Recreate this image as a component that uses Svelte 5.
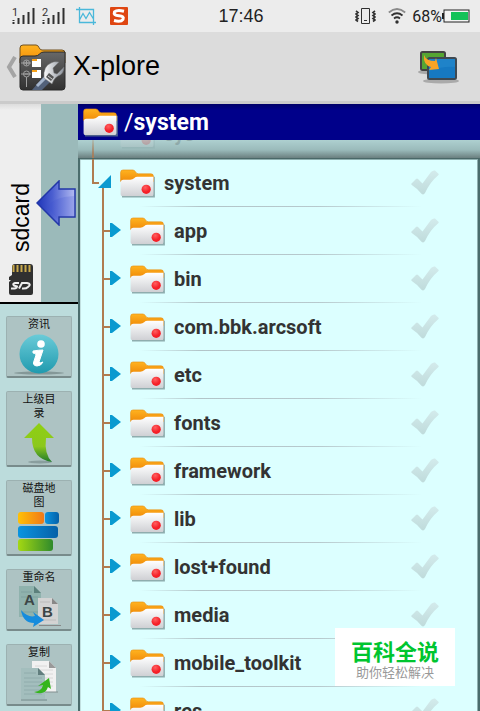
<script>
  const folders = ['app', 'bin', 'com.bbk.arcsoft', 'etc', 'fonts', 'framework', 'lib', 'lost+found', 'media', 'mobile_toolkit', 'res'];
  const tools = [
    { id: 'info', label: '资讯' },
    { id: 'up', label: '上级目录' },
    { id: 'map', label: '磁盘地图' },
    { id: 'rename', label: '重命名' },
    { id: 'copy', label: '复制' }
  ];
</script>

<svg class="defs" aria-hidden="true">
  <defs>
    <linearGradient id="orange" x2="0" y2="1"><stop stop-color="#ffb320" /><stop offset="1" stop-color="#f08a08" /></linearGradient>
    <linearGradient id="paper" x2="0" y2="1"><stop stop-color="#ffffff" /><stop offset="1" stop-color="#cfd0d4" /></linearGradient>
    <radialGradient id="red" cx=".4" cy=".3"><stop stop-color="#ff6060" /><stop offset="1" stop-color="#f52028" /></radialGradient>
    <linearGradient id="tick" x2="0" y2="1"><stop stop-color="#d3ebec" /><stop offset="1" stop-color="#bfdbdb" /></linearGradient>
    <linearGradient id="dark" x2="0" y2="1"><stop stop-color="#686868" /><stop offset="1" stop-color="#303030" /></linearGradient>
    <linearGradient id="steel"><stop stop-color="#fafafa" /><stop offset="1" stop-color="#8b929c" /></linearGradient>
    <linearGradient id="blue"><stop stop-color="#0a94e0" /><stop offset="1" stop-color="#0560a8" /></linearGradient>
    <linearGradient id="green"><stop stop-color="#a4d812" /><stop offset="1" stop-color="#2f8a2c" /></linearGradient>
    <linearGradient id="leaf" x2="0" y2="1"><stop stop-color="#8fd012" /><stop offset=".6" stop-color="#8cc81c" /><stop offset="1" stop-color="#1f7a2c" /></linearGradient>
    <linearGradient id="amber"><stop stop-color="#ffc107" /><stop offset="1" stop-color="#f07818" /></linearGradient>
    <linearGradient id="indigo"><stop stop-color="#1f35b8" /><stop offset=".4" stop-color="#4a5ed0" /><stop offset="1" stop-color="#b4bcf2" /></linearGradient>
    <linearGradient id="teal" x2="0" y2="1"><stop stop-color="#6acbd8" /><stop offset="1" stop-color="#209aae" /></linearGradient>
    <linearGradient id="fade" x2="0" y2="1"><stop stop-color="#b07c50" stop-opacity=".1" /><stop offset="1" stop-color="#a87c58" /></linearGradient>
  </defs>
</svg>

{#snippet folder()}
  <svg class="folder" width="35" height="29" viewBox="0 0 36 30" aria-hidden="true">
    <path d="M2 28.500h33V8" fill="none" stroke="#6d8a8c" stroke-width="2" opacity=".7" />
    <path d="M.5 13V3.500Q.5 1 3 1h10q2 0 3 2t3 2h13q2.500 0 2.500 2.500V13z" fill="url(#orange)" stroke="#e58a0c" stroke-width=".6" />
    <path d="M.5 14q0-3 3-3h7q2.500 0 4-1.500T18 8h16.500v18q0 2-2 2h-30q-2 0-2-2z" fill="url(#paper)" />
    <circle cx="27" cy="21" r="4.800" fill="url(#red)" />
  </svg>
{/snippet}

{#snippet check(name)}
  <label class="tick">
    <input type="checkbox" aria-label={name} />
    <svg width="28" height="26" viewBox="0 0 28 26" aria-hidden="true">
      <path d="M.5 13.500 5 9q1-.8 2 0l4.500 4.500L20 2q2-2 4-1.500l3.500 3.300q.5.700-.3 1.400Q19 12 14 23q-1.500 2.500-3.500.8Q7 19 .8 15q-.9-.7-.3-1.500z" fill="url(#tick)" />
    </svg>
  </label>
{/snippet}

<div class="screen">
  <div class="status">
    <div class="signals">
      {#each ['1', '2'] as sim}
        <span class="sim">
          <small>{sim}</small>
          <svg width="23" height="16" viewBox="0 0 23 16" aria-hidden="true">
            <path d="M1.500 12v1M1.500 14v2M6.500 10v6M11.500 7v9M16.500 4v12M21.500 0v16" stroke="#303030" stroke-width="2" />
          </svg>
        </span>
      {/each}
      <svg class="shot" width="20" height="18" viewBox="0 0 20 18" fill="none" stroke="#4ab8da" stroke-width="1.300" aria-hidden="true">
        <path d="M3.500 0v15.500H20M0 2.500h17.500V18M3.500 13l3.500-6.500 3 5 3.500-6 4 6.500" />
      </svg>
      <svg width="18" height="18" viewBox="0 0 18 18" aria-hidden="true">
        <rect width="18" height="18" rx="1" fill="#df4612" />
        <path d="M14 4.200Q7 2.500 4.500 4.800 3 8.500 9 8.800q5.500.3 4 3.500-2 3-9 1.200" fill="none" stroke="#fff" stroke-width="3" />
      </svg>
    </div>
    <time>17:46</time>
    <div class="state">
      <svg class="vibrate" width="21" height="18" viewBox="0 0 21 18" fill="none" stroke="#303030" aria-hidden="true">
        <path d="M6.500 1.500h8v15h-8zM9 13.500h3" />
        <path d="M1 4l2 1.500-2 1.500 2 1.500L1 10l2 1.500L1 13l2 1.500M20 4l-2 1.500L20 7l-2 1.500 2 1.500-2 1.500 2 1.500-2 1.500" stroke-width="1.600" />
      </svg>
      <svg class="wifi" width="18" height="16" viewBox="0 0 18 16" fill="none" stroke="#303030" stroke-width="1.700" aria-hidden="true">
        <path d="M.8 4.500Q9-2.500 17.200 4.500" stroke="#8a8a8a" /><path d="M3.500 7.500q5.500-4.500 11 0M6 10.500q3-2.500 6 0" />
        <circle cx="9" cy="14" r="1.700" fill="#303030" stroke="none" />
      </svg>
      <span>68%</span>
      <svg width="28" height="14" viewBox="0 0 28 14" aria-hidden="true">
        <path d="M0 4h2v6H0z" fill="#222" /><rect x="2" y="1" width="25" height="12" fill="#f4f4f4" stroke="#222" />
        <path d="M9 3h17v8H9z" fill="#14c258" />
      </svg>
    </div>
  </div>

  <header>
    <button class="back" aria-label="Back">
      <svg width="12" height="22" viewBox="0 0 12 22" aria-hidden="true"><path d="M9 1 3 11l6 10" fill="none" stroke="#a4a4a4" stroke-width="4" /></svg>
      <svg width="48" height="48" viewBox="0 0 48 48" aria-hidden="true">
        <path d="M1 16V5q0-3 3-3h13q2 0 3 2.500T23 7h20q3 0 3 3v10H1z" fill="url(#orange)" stroke="#705020" />
        <path d="M1 16q0-3 3-3h12q3 0 4.500-2t4.500-2h21v35q0 3-3 3H4q-3 0-3-3z" fill="url(#dark)" stroke="#2b2b2b" />
        <g fill="none" stroke="#a0a0a0"><path d="M2 20h10M7.500 34v10M2 31h10M5 20h5M7.500 17.500v5M5.500 31h4" /><circle cx="7.500" cy="20" r="3" /><circle cx="7.500" cy="31" r="3" /></g>
        <path d="M13 17h4l1-1h4v8h-9zM13 28h4l1-1h4v8h-9z" fill="#fff" /><path d="M13 16h5v2h-5zM13 27h5v2h-5z" fill="#f7a21b" />
        <path d="m13 47 13-15 6 6-9 9z" fill="#52617a" /><path d="m18 43 11-11" stroke="#a5b5cc" stroke-width="3" />
        <path d="M25 35q-1-12 7-15 3-2 8-1l-6 6 1 5 3 1 7-7q0 7-6 9-4 2-6 8z" fill="url(#steel)" stroke="#777" stroke-width=".5" />
        <path d="m27 34 5 4 3-4-5-4z" fill="#555" /><path d="m29 33 4 3" stroke="#ccc" />
      </svg>
    </button>
    <h1>X-plore</h1>
    <button class="remote" aria-label="Remote display">
      <svg width="42" height="34" viewBox="0 0 42 34" aria-hidden="true">
        <ellipse cx="14" cy="22" rx="14" ry="2.500" fill="#a9a9a9" /><rect x="3" y="2" width="24" height="18" rx="1.500" fill="#55a533" stroke="#444" stroke-width="2" />
        <ellipse cx="23" cy="31" rx="18" ry="2.500" fill="#aaa" /><rect x="10" y="8" width="28" height="21" rx="1.500" fill="#1679c2" stroke="#3f4952" stroke-width="2" />
        <path d="M11 9h26v8q-12-1-26 4z" fill="#359ddb" opacity=".3" />
        <path d="M6 5q2 6 11 6l1-3 3 11-10 1 2-3Q5 15 6 5z" fill="#f9a425" />
      </svg>
    </button>
  </header>

  <main>
    <aside>
      <div class="volumes">
        <button class="volume">
          <span>sdcard</span>
          <svg width="24" height="32" viewBox="0 0 24 32" aria-hidden="true">
            <path d="M3 11V3q0-3 3-3h15q3 0 3 3v26q0 2-2 2H2q-2 0-2-2V18l2-2H0v-3z" fill="#303030" />
            <path d="M4.500 1v7M8.500 1v7M12.500 1v7M16.500 1v7M20.500 1v7" stroke="#c8a84a" stroke-width="2" />
            <path d="M10 19H6q-3 1-1 2.500l3 1Q8 25 2 24.500M10 24.500l3-5.500h5q5 1 1 4-2 2-6 1.500" fill="none" stroke="#eee" stroke-width="2" />
          </svg>
        </button>
        <svg class="pointer" width="40" height="46" viewBox="0 0 40 46" aria-hidden="true">
          <path d="M1 23 23 1v8h16v28H23v8z" fill="url(#indigo)" stroke="#2337a8" stroke-width="1.500" />
          <path d="M12 27q5-10 26-11v20H22v4z" fill="#3b52d0" opacity=".2" />
        </svg>
      </div>
      <div class="tools">
        {#each tools as tool}
          <button>
            <span>{tool.label}</span>
            {#if tool.id === 'info'}
              <svg width="54" height="44" viewBox="0 0 54 44" aria-hidden="true">
                <ellipse cx="27" cy="41" rx="25" ry="1.500" fill="#728686" opacity=".7" /><circle cx="27" cy="22" r="19.500" fill="url(#teal)" />
                <circle cx="29" cy="12" r="3.800" fill="#fff" /><path d="M21 19q6-1 10-1l-4 12q0 2 4 0-2 4-6 4-5-.5-3-5l2-6q0-2-3-2z" fill="#fff" stroke="#fff" />
              </svg>
            {:else if tool.id === 'up'}
              <svg width="54" height="44" viewBox="0 0 54 44" aria-hidden="true">
                <ellipse cx="28" cy="41" rx="12" ry="1.500" fill="#728686" opacity=".6" /><path d="M27 2 42 17h-8q-2 16 6 24-20-3-20-24h-8z" fill="url(#leaf)" />
              </svg>
            {:else if tool.id === 'map'}
              <svg width="54" height="44" viewBox="0 0 54 44" aria-hidden="true">
                <rect x="6" y="2" width="26" height="12" rx="3" fill="url(#amber)" /><rect x="33" y="2" width="14" height="12" rx="3" fill="url(#blue)" />
                <rect x="6" y="16" width="40" height="12" rx="3" fill="url(#blue)" /><rect x="6" y="29" width="35" height="12" rx="3" fill="url(#green)" />
              </svg>
            {:else if tool.id === 'rename'}
              <svg width="54" height="44" viewBox="0 0 54 44" aria-hidden="true">
                <path d="M7 1h15l7 7v24H7z" fill="#8fb2ad" /><path d="m22 1 7 7h-7z" fill="#5c807c" /><path d="M9 7h11M9 12h17M9 27h17" stroke="#7fa19e" />
                <path d="M26 13h14l6 6v20H26z" fill="#d3d3d3" /><path d="m40 13 6 6h-6zM27 40h22v1H27z" fill="#888" /><path d="M28 17h10M28 35h16" stroke="#bbb" />
                <text x="12" y="20">A</text><text x="30" y="32">B</text>
                <path d="M9 25q7 8 14 6l-2-4 11 8-11 7 1-4Q11 38 9 25z" fill="#168cdd" />
              </svg>
            {:else}
              <svg width="54" height="44" viewBox="0 0 54 44" aria-hidden="true">
                <path d="M20 1h17l7 7v24H20z" fill="#f1f1f1" /><path d="m37 1 7 7h-7z" fill="#999" /><path d="M23 6h12M23 10h18M23 14h18M23 18h18M23 22h18M23 26h18" stroke="#d8d8d8" /><path d="M25 32h21" stroke="#839090" />
                <path d="M9 8h17l7 7v24H9z" fill="#a3bebd" /><path d="m26 8 7 7h-7z" fill="#617e7e" /><path d="M12 13h12M12 18h18M12 22h18M12 26h18M12 30h18M12 34h18" stroke="#90acac" /><path d="M9 40h26" stroke="#718888" />
                <path d="M22 32q8-1 9-7l-5 1 11-8 2 11-3-2q-3 9-14 5z" fill="#35b51d" />
              </svg>
            {/if}
          </button>
        {/each}
      </div>
    </aside>

    <section>
      <div class="path">{@render folder()}<h2><i>/</i>system</h2></div>
      <div class="above" aria-hidden="true">
        <div class="row">
          <svg class="gutter" width="40" height="48" viewBox="0 0 40 48"><path d="M12 28h2v20h-2z" fill="url(#fade)" /></svg>
          <div class="ghost">{@render folder()}<span>sys</span></div>
        </div>
      </div>
      <ul>
        <li class="row">
          <button class="gutter" aria-label="Collapse system">
            <svg width="40" height="48" viewBox="0 0 40 48" aria-hidden="true"><path d="M13 0v24h6M23 28v20" fill="none" stroke="#b07c50" stroke-width="2" /><path d="M31 16v13H18z" fill="#0a9ad0" /></svg>
          </button>
          <button class="name">{@render folder()}<span>system</span></button>
          {@render check('system')}
        </li>
        {#each folders as name}
          <li class="row">
            <button class="gutter" aria-label="Expand {name}">
              <svg width="50" height="48" viewBox="0 0 50 48" aria-hidden="true"><path d="M23 0v48M23 24h7" stroke="#b07c50" stroke-width="2" /><path d="M30 16h2l9 7-9 7h-2z" fill="#0a9ad0" /></svg>
            </button>
            <button class="name">{@render folder()}<span>{name}</span></button>
            {@render check(name)}
          </li>
        {/each}
      </ul>
    </section>
  </main>

  <div class="badge"><strong>百科全说</strong><span>助你轻松解决</span></div>
</div>

<style>
  :global(body) { margin: 0; }
  * { box-sizing: border-box; }
  button { padding: 0; border: 0; background: none; color: inherit; font: inherit; cursor: pointer; }
  svg { display: block; flex: none; }
  .defs { position: absolute; width: 0; height: 0; }
  .screen { position: relative; display: flex; flex-direction: column; height: 100vh; overflow: hidden; font-family: Roboto, "Noto Sans CJK SC", sans-serif; color: #333; }

  .status { display: grid; grid-template-columns: 1fr auto 1fr; align-items: center; flex: none; height: 32px; padding: 0 10px 0 12px; background: #ececec; }
  .signals, .state { display: flex; align-items: center; }
  .sim { display: flex; margin-right: 7px; }
  .sim small { width: 7px; margin-right: -7px; font-size: 11px; line-height: 10px; }
  .shot { margin: 0 14px 0 4px; }
  time { font-family: "Liberation Sans", sans-serif; font-size: 18px; color: #222; }
  .state { justify-content: flex-end; font-size: 16px; color: #222; }
  .vibrate { margin-right: 12px; }
  .wifi { margin-right: 6px; }

  header { display: flex; align-items: center; flex: none; height: 72px; padding: 0 20px 0 6px; border-bottom: 3px solid #cbcbcb; background: #dcdcdc; }
  .back { display: flex; align-items: center; gap: 1px; }
  h1 { flex: 1; margin: 0 0 0 6px; font: 400 27px "Liberation Sans", sans-serif; color: #000; }

  main { display: flex; flex: 1; min-height: 0; }
  aside { flex: none; width: 78px; background: #bcdcdc; }
  .volumes { position: relative; height: 200px; border-bottom: 2px solid #000; background: #9bbaba; }
  .volume { display: flex; flex-direction: column; align-items: center; justify-content: flex-end; gap: 12px; width: 41px; height: 100%; padding-bottom: 6px; background: linear-gradient(#ddd, #eee 6px); }
  .volume span { writing-mode: vertical-rl; transform: rotate(180deg); font: 23px/28px "Liberation Sans", sans-serif; color: #000; }
  .pointer { position: absolute; top: 76px; right: 2px; }
  .tools { display: flex; flex-direction: column; gap: 13px; padding: 12px 6px; }
  .tools button { display: flex; flex-direction: column; align-items: center; padding-top: 1px; border: 1px solid #9cb1b1; border-bottom: 2px solid #788b8b; border-radius: 2px; background: #adc3c3; }
  .tools span { width: 36px; font-size: 11px; line-height: 14px; text-align: center; color: #111; }
  .tools text { font: 700 15px "Liberation Sans", sans-serif; fill: #3c4646; }

  section { display: flex; flex-direction: column; flex: 1; min-width: 0; }
  .path { display: flex; align-items: center; flex: none; gap: 6px; height: 36px; padding-left: 5px; background: linear-gradient(#000068, #00008a 6px); color: #fff; }
  h2 { margin: 0; font-size: 23px; font-weight: 700; }
  h2 i { font-style: normal; font-weight: 400; }
  .above { display: flex; flex-direction: column; justify-content: flex-end; flex: none; height: 19px; overflow: hidden; padding-left: 2px; border-bottom: 1px solid #4a6868; background: linear-gradient(#aed0d0, #9ababa 10px, #6b8080); }
  .above .row { background: none; }
  .ghost { display: flex; align-items: center; gap: 9px; font-size: 20px; font-weight: 700; opacity: 0.2; }
  ul { flex: 1; min-height: 0; margin: 0; padding: 0; overflow: hidden; list-style: none; border-left: 2px solid #4a6c6c; border-right: 2px solid #4a6c6c; background: #dcffff; box-shadow: inset -1px 1px #8fb0b0, inset 1px 0 #c2e0e0; }
  .row { display: flex; align-items: center; flex: none; height: 48px; background: linear-gradient(90deg, transparent 60px, #b2c4c8 120px, #b7c9cd 60%, transparent 86%) bottom / 100% 1px no-repeat; }
  .gutter { flex: none; }
  .name { display: flex; align-items: center; flex: 1; gap: 9px; min-width: 0; font-size: 20px; font-weight: 700; text-align: left; }
  .tick { position: relative; flex: none; margin-right: 39px; cursor: pointer; }
  .tick input { position: absolute; inset: 0; width: 100%; height: 100%; margin: 0; opacity: 0; }

  .badge { position: absolute; right: 25px; bottom: 25px; display: flex; flex-direction: column; align-items: center; width: 120px; padding: 9px 16px 6px; background: #fff; font-family: "Noto Sans CJK SC", sans-serif; }
  .badge strong { font-size: 22px; line-height: 27px; color: #00c52f; }
  .badge span { font-size: 13px; line-height: 16px; color: #999; white-space: nowrap; }
</style>
